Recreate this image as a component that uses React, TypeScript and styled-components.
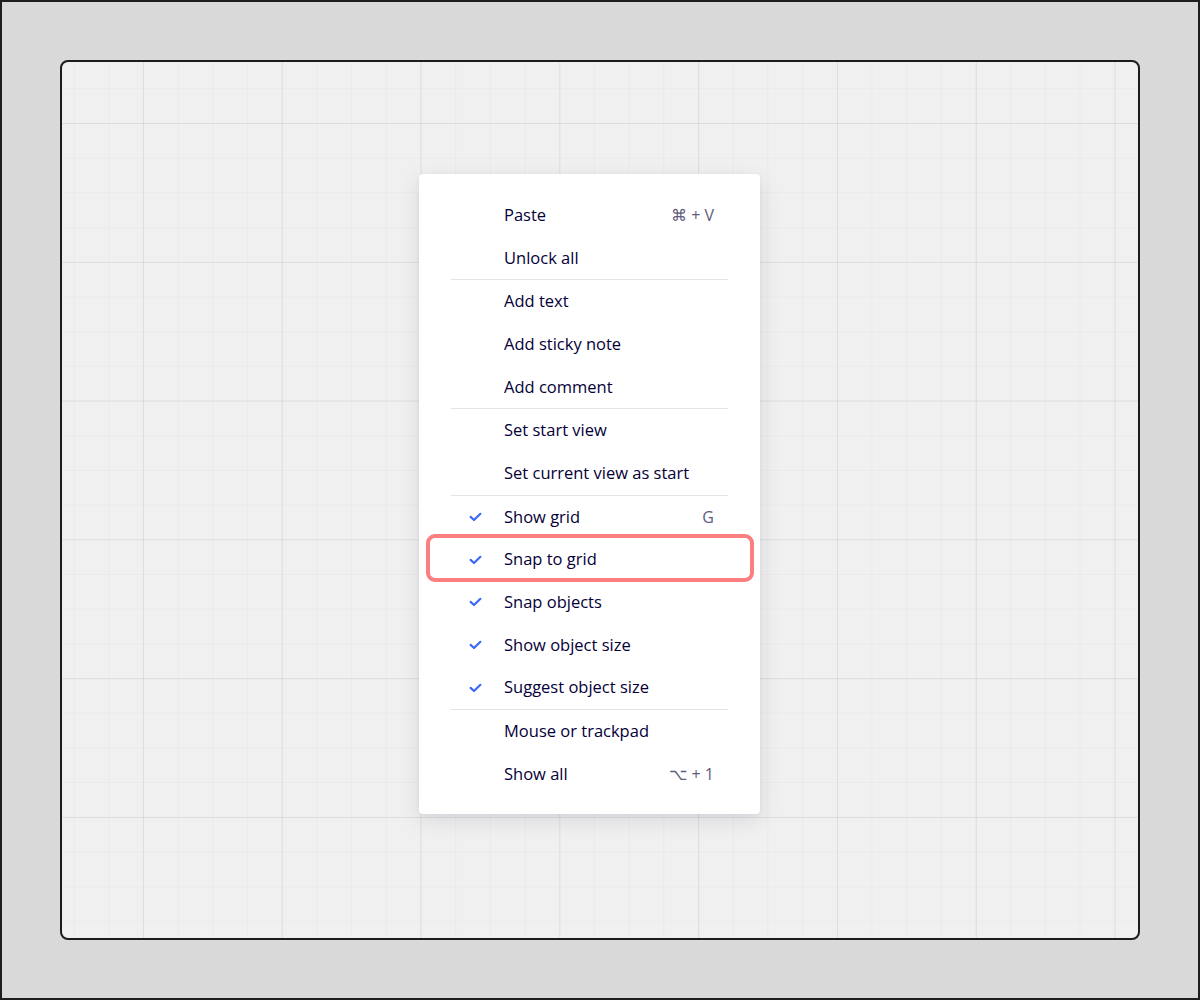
import React from "react";
import styled, { createGlobalStyle } from "styled-components";

const Global = createGlobalStyle`
  html, body { margin: 0; padding: 0; background: #d9d9d9; }
  * { box-sizing: border-box; }
  body { font-family: "Open Sans", "Noto Sans", "Liberation Sans", sans-serif; }
`;

const Frame = styled.div`
  width: 1200px;
  height: 1000px;
  border: 2px solid #1e1e1e;
  background: #d9d9d9;
  padding: 58px;
`;

const Canvas = styled.div`
  position: relative;
  width: 1080px;
  height: 880px;
  border: 2px solid #1c1c1c;
  border-radius: 8px;
  overflow: hidden;
  background-color: #f0f0f0;
  background-image:
    linear-gradient(to right, rgba(0, 0, 0, 0.06) 1px, transparent 1px),
    linear-gradient(to bottom, rgba(0, 0, 0, 0.06) 1px, transparent 1px),
    linear-gradient(to right, rgba(0, 0, 0, 0.025) 1px, transparent 1px),
    linear-gradient(to bottom, rgba(0, 0, 0, 0.025) 1px, transparent 1px);
  background-size: 138.8px 138.8px, 138.8px 138.8px, 34.7px 34.7px, 34.7px 34.7px;
  background-position: 81px 61px, 81px 61px, 11.6px 26.3px, 11.6px 26.3px;
`;

const Menu = styled.div`
  position: absolute;
  left: 357px;
  top: 112px;
  width: 341px;
  height: 640px;
  background: #ffffff;
  border-radius: 4px;
  box-shadow: 0 6px 22px rgba(5, 0, 56, 0.1), 0 1px 4px rgba(5, 0, 56, 0.05);
  padding: 20px 0 18px;
  display: flex;
  flex-direction: column;
`;

const Row = styled.div<{ $highlight?: boolean }>`
  position: relative;
  height: 42.67px;
  flex: none;
  display: flex;
  align-items: center;
  padding: 0 46px 0 49px;
  color: #050038;
  font-size: 16.5px;
  line-height: 1;

  ${(p) =>
    p.$highlight &&
    `
    &::after {
      content: "";
      position: absolute;
      left: 7px;
      right: 6px;
      top: -4.5px;
      bottom: -1.5px;
      border: 4px solid #fb7f7f;
      border-radius: 9px;
      pointer-events: none;
    }
  `}
`;

const CheckSlot = styled.span`
  width: 14px;
  height: 14px;
  margin-right: 22px;
  display: flex;
  align-items: center;
  justify-content: center;
  flex: none;
`;

const Label = styled.span`
  flex: 1;
  white-space: nowrap;
`;

const Shortcut = styled.span`
  color: #5e5c7c;
  font-size: 16px;
  white-space: nowrap;
`;

const Divider = styled.div`
  height: 1px;
  flex: none;
  margin: 0 32px;
  background: #e3e3e8;
`;

const Check = () => (
  <svg width="13" height="10" viewBox="0 0 13 10" fill="none">
    <path
      d="M1.6 4.9 L5 8 L11.4 1.8"
      stroke="#3d6af5"
      strokeWidth="2.2"
      strokeLinecap="round"
      strokeLinejoin="round"
    />
  </svg>
);

type Item = { label: string; shortcut?: string; checked?: boolean; highlight?: boolean };

const groups: Item[][] = [
  [{ label: "Paste", shortcut: "⌘ + V" }, { label: "Unlock all" }],
  [{ label: "Add text" }, { label: "Add sticky note" }, { label: "Add comment" }],
  [{ label: "Set start view" }, { label: "Set current view as start" }],
  [
    { label: "Show grid", shortcut: "G", checked: true },
    { label: "Snap to grid", checked: true, highlight: true },
    { label: "Snap objects", checked: true },
    { label: "Show object size", checked: true },
    { label: "Suggest object size", checked: true },
  ],
  [{ label: "Mouse or trackpad" }, { label: "Show all", shortcut: "⌥ + 1" }],
];

export default function App() {
  return (
    <>
      <Global />
      <Frame>
        <Canvas>
          <Menu>
            {groups.map((g, gi) => (
              <React.Fragment key={gi}>
                {gi > 0 && <Divider />}
                {g.map((it) => (
                  <Row key={it.label} $highlight={it.highlight}>
                    <CheckSlot>{it.checked && <Check />}</CheckSlot>
                    <Label>{it.label}</Label>
                    {it.shortcut && <Shortcut>{it.shortcut}</Shortcut>}
                  </Row>
                ))}
              </React.Fragment>
            ))}
          </Menu>
        </Canvas>
      </Frame>
    </>
  );
}
